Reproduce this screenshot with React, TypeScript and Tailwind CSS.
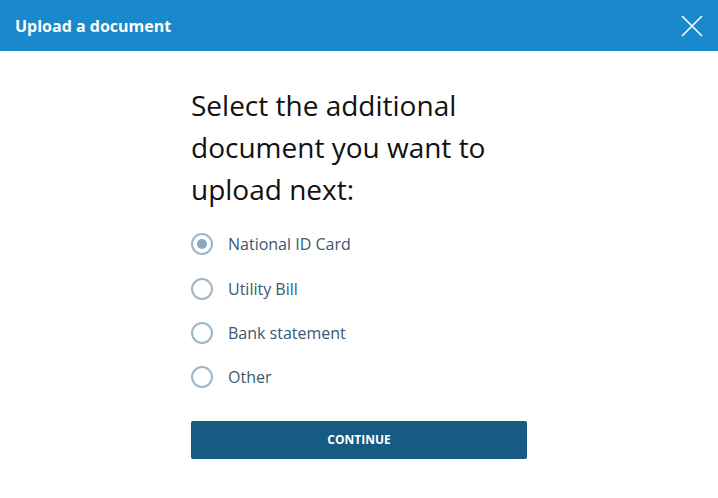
import { useState } from "react";

const options = ["National ID Card", "Utility Bill", "Bank statement", "Other"];

export default function App() {
  const [selected, setSelected] = useState(0);

  return (
    <div className="h-[498px] w-[718px] bg-white font-['Open_Sans',sans-serif]">
      <div className="flex h-[51px] items-center justify-between bg-[#1a88cc] pl-[15px] pr-[14px]">
        <h2 className="text-[16px] font-bold text-white">Upload a document</h2>
        <svg width="24" height="24" viewBox="0 0 24 24" className="text-white">
          <path d="M2 2L22 22M22 2L2 22" stroke="currentColor" strokeWidth="1.6" fill="none" />
        </svg>
      </div>

      <div className="mx-auto w-[336px] pt-[33px]">
        <h1 className="text-[28px] leading-[42px] text-[#111]">
          Select the additional document you want to upload next:
        </h1>

        <div className="mt-[12px] flex flex-col">
          {options.map((label, i) => (
            <button
              key={label}
              type="button"
              onClick={() => setSelected(i)}
              className="flex h-[44.4px] items-center gap-[15px] text-left"
            >
              <span className="flex h-[22px] w-[22px] items-center justify-center rounded-full border-2 border-[#9db6c7]">
                {selected === i ? <span className="h-[10px] w-[10px] rounded-full bg-[#8aa9bf]" /> : null}
              </span>
              <span className="text-[16px] text-[#3b5870]">{label}</span>
            </button>
          ))}
        </div>

        <button
          type="button"
          className="mt-[21px] h-[38px] w-full rounded-[2px] bg-[#175a82] text-[12px] font-bold text-white"
        >
          CONTINUE
        </button>
      </div>
    </div>
  );
}
